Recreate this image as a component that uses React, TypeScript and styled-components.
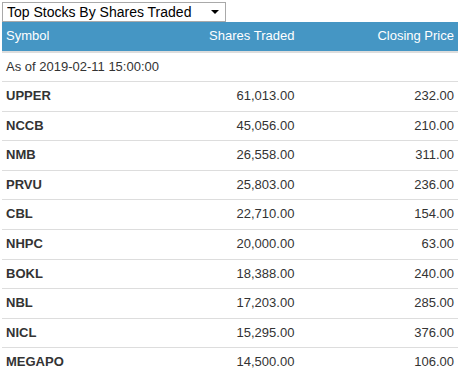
import { createGlobalStyle } from "styled-components";
import styled from "styled-components";

const GlobalStyle = createGlobalStyle`
  html, body {
    margin: 0;
    padding: 0;
    background: #fff;
  }
  body {
    font-family: "Liberation Sans", Arial, sans-serif;
    font-size: 13px;
    line-height: 1.42857;
    color: #333;
  }
`;

const Page = styled.div`
  padding: 2px 1px 2px 2px;
`;

const SelectWrap = styled.div`
  position: relative;
  width: 224px;
  height: 20px;
`;

const Select = styled.select`
  appearance: none;
  -webkit-appearance: none;
  width: 100%;
  height: 100%;
  margin: 0;
  padding: 0 20px 0 4px;
  border: 1px solid #a9a9a9;
  border-radius: 0;
  background: #fff;
  font-family: "Liberation Sans", Arial, sans-serif;
  font-size: 14px;
  color: #000;
  outline: none;
`;

const Caret = styled.span`
  position: absolute;
  right: 7px;
  top: 8px;
  width: 0;
  height: 0;
  border-left: 4px solid transparent;
  border-right: 4px solid transparent;
  border-top: 4px solid #000;
  pointer-events: none;
`;

const Table = styled.table`
  width: 100%;
  border-collapse: collapse;
  border-spacing: 0;
  table-layout: fixed;
`;

const Col = styled.col<{ $w: string }>`
  width: ${({ $w }) => $w};
`;

const HeadCell = styled.th<{ $align?: string }>`
  background: #4596c4;
  color: #fff;
  font-weight: normal;
  text-align: ${({ $align }) => $align || "left"};
  padding: 5px 4px;
  border-bottom: 2px solid #ddd;
`;

const Cell = styled.td<{ $align?: string; $bold?: boolean; $first?: boolean }>`
  padding: 5px 4px;
  border-top: ${({ $first }) => ($first ? "0" : "1px solid #ddd")};
  text-align: ${({ $align }) => $align || "left"};
  font-weight: ${({ $bold }) => ($bold ? "bold" : "normal")};
  white-space: nowrap;
`;

const stocks = [
  { symbol: "UPPER", shares: "61,013.00", price: "232.00" },
  { symbol: "NCCB", shares: "45,056.00", price: "210.00" },
  { symbol: "NMB", shares: "26,558.00", price: "311.00" },
  { symbol: "PRVU", shares: "25,803.00", price: "236.00" },
  { symbol: "CBL", shares: "22,710.00", price: "154.00" },
  { symbol: "NHPC", shares: "20,000.00", price: "63.00" },
  { symbol: "BOKL", shares: "18,388.00", price: "240.00" },
  { symbol: "NBL", shares: "17,203.00", price: "285.00" },
  { symbol: "NICL", shares: "15,295.00", price: "376.00" },
  { symbol: "MEGAPO", shares: "14,500.00", price: "106.00" },
];

export default function App() {
  return (
    <Page>
      <GlobalStyle />
      <SelectWrap>
        <Select defaultValue="shares">
          <option value="shares">Top Stocks By Shares Traded</option>
          <option value="turnover">Top Stocks By Turnover</option>
          <option value="transactions">Top Stocks By Transactions</option>
        </Select>
        <Caret />
      </SelectWrap>
      <Table>
        <colgroup>
          <Col $w="30%" />
          <Col $w="35%" />
          <Col $w="35%" />
        </colgroup>
        <thead>
          <tr>
            <HeadCell>Symbol</HeadCell>
            <HeadCell $align="right">Shares Traded</HeadCell>
            <HeadCell $align="right">Closing Price</HeadCell>
          </tr>
        </thead>
        <tbody>
          <tr>
            <Cell colSpan={3} $first>As of 2019-02-11 15:00:00</Cell>
          </tr>
          {stocks.map((s) => (
            <tr key={s.symbol}>
              <Cell $bold>{s.symbol}</Cell>
              <Cell $align="right">{s.shares}</Cell>
              <Cell $align="right">{s.price}</Cell>
            </tr>
          ))}
        </tbody>
      </Table>
    </Page>
  );
}
